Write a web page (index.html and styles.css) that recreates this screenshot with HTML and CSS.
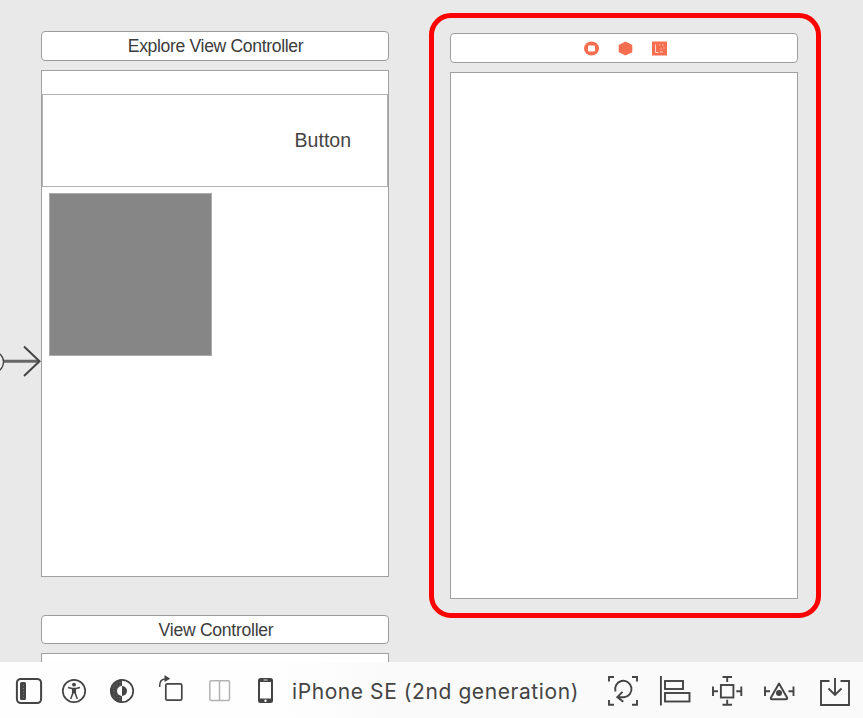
FILE: index.html
```
<!DOCTYPE html>
<html lang="en">
<head>
<meta charset="utf-8">
<title>Storyboard</title>
<link rel="stylesheet" href="styles.css">
</head>
<body>
<main class="canvas">
  <section class="column">
    <div class="scene-title"><span class="label explore">Explore View Controller</span></div>
    <div class="screen explore-screen">
      <div class="header-view"><span class="label button">Button</span></div>
      <div class="cell"></div>
    </div>
    <div class="scene-title second"><span class="label view">View Controller</span></div>
    <div class="screen next-screen"></div>
  </section>
  <section class="selected">
    <div class="scene-title dock">
      <svg width="84" height="16" viewBox="0 0 84 16">
        <ellipse cx="7.500" cy="7.500" rx="7.500" ry="7" fill="#f76d50"/>
        <rect x="4" y="4.500" width="7" height="6" rx="1" fill="#fff"/>
        <path d="M41.500.5 48.300 4v7.200l-6.800 3.400-6.800-3.400V4z" fill="#f76d50"/>
        <path d="M68 .5h15v14H68z" fill="#f76d50"/>
        <path d="M71.500 3.500v8h3M75 4h1M78 4h1.500M80 6.500v1M76.500 8h1M76 11h3" fill="none" stroke="#ffd2c8"/>
      </svg>
    </div>
    <div class="screen empty-screen"></div>
  </section>
  <svg class="entry" width="42" height="36" viewBox="0 0 42 36">
    <circle cx="-7" cy="19" r="10.500" fill="#eee" stroke="#444" stroke-width="1.300"/>
    <path d="M4 18.200h35" stroke="#666" stroke-width="3"/>
    <path d="M24 3.500 39.500 18.200 24 33" fill="none" stroke="#444" stroke-width="2"/>
  </svg>
</main>
<footer class="toolbar">
  <svg class="tools" width="290" height="56" viewBox="0 662 290 56" fill="none" stroke="#444" stroke-width="1.700">
    <rect x="16.900" y="678.900" width="24.200" height="24.200" rx="4" stroke-width="2"/>
    <rect x="20" y="682" width="6" height="18" rx="1.500" fill="#444" stroke="none"/>
    <path d="M23.500 685v13" stroke="#888" stroke-width=".8" stroke-dasharray="1 2"/>
    <circle cx="74" cy="691" r="11.200"/>
    <circle cx="74" cy="684.700" r="1.900" fill="#444" stroke="none"/>
    <path d="M68 687.500 72 688.500h4l4-1M72.700 688.500v5l-2 5.500M75.300 688.500v5l2 5.500" stroke-width="1.500"/>
    <path d="M72.500 688h3v5.500h-3z" fill="#444" stroke="none"/>
    <circle cx="122" cy="691" r="11.200"/>
    <path d="M122 679.500a11.500 11.500 0 0 0 0 23v-6.500a5 5 0 0 1 0-10z" fill="#444" stroke="none"/>
    <path d="M122 686a5 5 0 0 1 0 10z" fill="#444" stroke="none"/>
    <path d="M120 682v4M117 682.500v17M114 684.500v13M120 697v4" stroke="#929292" stroke-width=".8" stroke-dasharray="1 2"/>
    <rect x="165.800" y="683.900" width="16" height="16.300" rx="1.500"/>
    <path d="M159.700 687v-1.500q0-6.500 6-6.500H166" stroke-width="1.500"/>
    <path d="m164.500 675 5.700 3.800-5.700 3.200z" fill="#444" stroke="none"/>
    <g stroke="#b2b2b2" stroke-width="1.500"><rect x="209.800" y="680.800" width="19.700" height="19.700" rx="1.500"/><path d="M219.500 681v19"/></g>
    <rect x="258" y="678" width="15" height="25" rx="2.500" fill="#444" stroke="none"/>
    <path d="M260 682h11v16.500h-11z" fill="#fff" stroke="none"/>
    <path d="M263.500 680h4" stroke="#ddd" stroke-width="1"/>
    <circle cx="265.500" cy="700.800" r="1.200" fill="#fff" stroke="none"/>
  </svg>
  <span class="label device">iPhone SE (2nd generation)</span>
  <svg class="tools constraints" width="273" height="56" viewBox="590 662 273 56" fill="none" stroke="#444" stroke-width="1.900">
    <path d="M609 681.500V677h5M632 677h5v4.500M637 700v4.700h-5M614 704.700h-5V700"/>
    <path d="M615.500 691.500A8.200 8.200 0 1 1 624 697.200h-5M622.500 691.800l-5.200 5.300 6 4.600"/>
    <path d="M660.900 676v29.500"/><rect x="665" y="681" width="18" height="8"/><rect x="665" y="693" width="24.500" height="8.500"/>
    <rect x="720.900" y="685" width="12.500" height="12.500"/>
    <path d="M722.500 677h9.500M727.200 677v5M722.500 704.700h9.500M727.200 704.700v-5M713 686.500v9.500M713 691.200h5M741.300 686.500v9.500M741.300 691.200h-5"/>
    <path d="m779 683.500-8 14q-.8 1.700 1 1.700h14q1.800 0 1-1.700z" stroke-linejoin="round"/>
    <circle cx="779" cy="693" r="3" fill="#444" stroke="none"/>
    <path d="M765 686.500v9.500M765 691.200h5M793.500 686.500v9.500M793.500 691.200h-5"/>
    <path d="M829.500 681h-8.500v24h28v-24h-8.500M835 678v16.500M828.500 688.500l6.500 6.500 6.500-6.500"/>
  </svg>
</footer>
</body>
</html>
```
FILE: styles.css
```
* { box-sizing: border-box; }
body {
  margin: 0;
  width: 863px;
  height: 718px;
  overflow: hidden;
  display: flex;
  flex-direction: column;
  color: #444;
  font-family: "Liberation Sans", Arial, sans-serif;
}
svg { display: block; flex: none; }
.canvas {
  position: relative;
  height: 662px;
  flex: none;
  display: flex;
  align-items: flex-start;
  gap: 40px;
  padding-left: 41px;
  overflow: hidden;
  background: #e9e9e9;
}
.column { width: 348px; padding-top: 31px; }
.scene-title {
  height: 30px;
  display: flex;
  align-items: center;
  justify-content: center;
  background: #fff;
  border: 1px solid #9d9d9d;
  border-radius: 4px;
}
.label { white-space: nowrap; flex: none; }
.explore, .view {
  font-size: 17.600px;
  line-height: 28px;
  color: #3c3c3c;
}
.explore { letter-spacing: -.35px; padding-left: 1px; }
.view { letter-spacing: -.28px; padding: 1px 0 0 2px; }
.screen { background: #fff; border: 1px solid #a0a0a0; }
.explore-screen { height: 507px; margin-top: 9px; padding-top: 23px; }
.header-view {
  height: 93px;
  display: flex;
  align-items: center;
  justify-content: flex-end;
  padding-right: 36px;
  border: 1px solid #b2b2b2;
}
.button { font-size: 19.500px; }
.cell {
  width: 163px;
  height: 163px;
  margin: 6px 0 0 7px;
  background: #868686;
  border: 1px solid #aaa;
}
.second { margin-top: 38px; height: 29px; }
.next-screen { height: 30px; margin-top: 9px; }
.selected {
  width: 392px;
  height: 605px;
  margin-top: 13px;
  padding: 15px 16px;
  border: 5px solid #f00;
  border-radius: 22px;
}
.dock { width: 348px; padding: 1px 0 0 3px; }
.empty-screen { width: 348px; height: 527px; margin-top: 9px; }
.entry { position: absolute; left: 0; top: 343px; }
.toolbar {
  height: 56px;
  flex: none;
  display: flex;
  align-items: center;
  background: linear-gradient(90deg, #fefefe 0 280px, #fafafa 390px);
}
.device {
  width: 298px;
  padding: 2px 0 0 2px;
  font-family: Inter, "Liberation Sans", sans-serif;
  font-size: 21px;
  letter-spacing: .58px;
}
.constraints { margin-left: 2px; }
```
